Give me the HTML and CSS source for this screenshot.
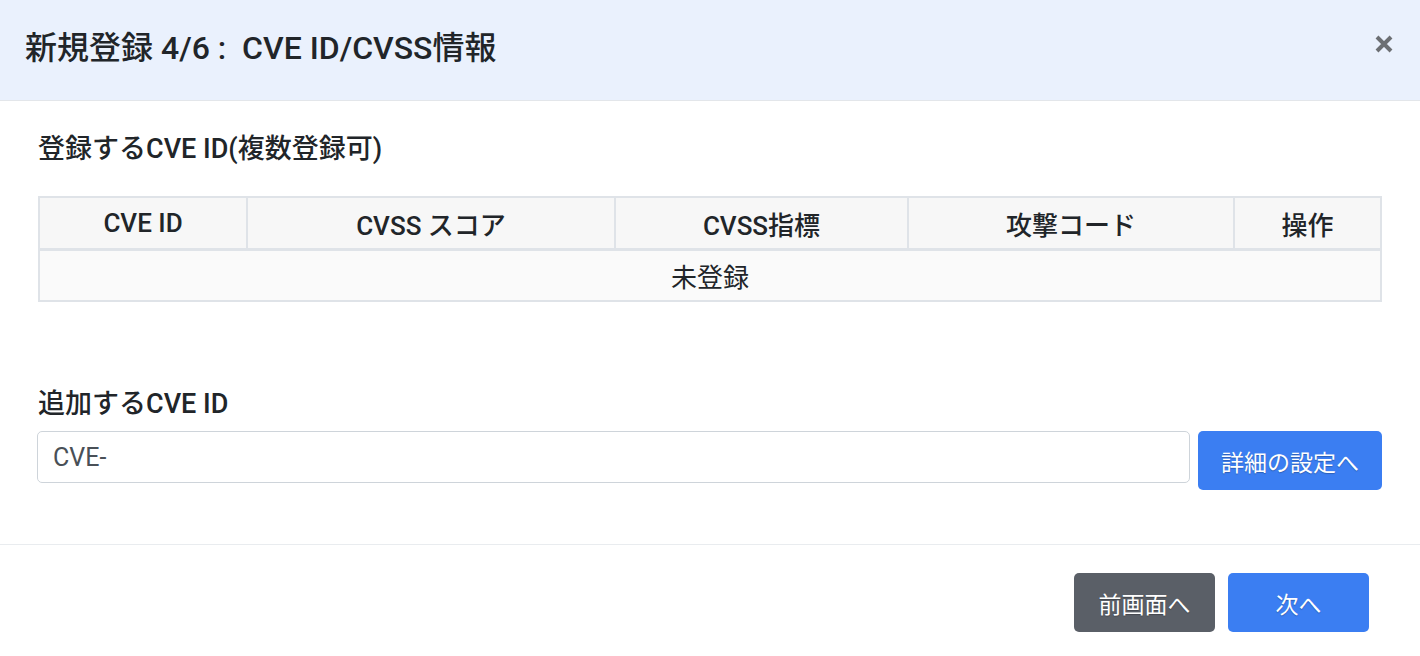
FILE: index.html
```html
<!DOCTYPE html>
<html lang="ja">
<head>
    <meta charset="UTF-8">
    <meta name="viewport" content="width=device-width, initial-scale=1.0">
    <title>新規登録 4/6</title>
    <link rel="stylesheet" href="styles.css">
</head>
<body>
    <div class="modal">
        <header class="modal-header">
            <h1 class="modal-title">新規登録 4/6 :&nbsp; CVE ID/CVSS情報</h1>
            <button class="close-button" aria-label="閉じる">
                <svg width="20" height="20" viewBox="0 0 20 20">
                    <path d="M3 3 L17 17 M17 3 L3 17" stroke="#6c6f73" stroke-width="4" />
                </svg>
            </button>
        </header>

        <div class="modal-body">
            <h2 class="section-title first">登録するCVE ID(複数登録可)</h2>
            <table class="cve-table">
                <thead>
                    <tr>
                        <th class="col-id">CVE ID</th>
                        <th class="col-score">CVSS スコア</th>
                        <th class="col-metric">CVSS指標</th>
                        <th class="col-exploit">攻撃コード</th>
                        <th class="col-action">操作</th>
                    </tr>
                </thead>
                <tbody>
                    <tr>
                        <td colspan="5">未登録</td>
                    </tr>
                </tbody>
            </table>

            <h2 class="section-title second">追加するCVE ID</h2>
            <div class="add-row">
                <input type="text" class="cve-input" value="CVE-">
                <button class="btn btn-primary btn-detail">詳細の設定へ</button>
            </div>
        </div>

        <footer class="modal-footer">
            <button class="btn btn-secondary">前画面へ</button>
            <button class="btn btn-primary">次へ</button>
        </footer>
    </div>
</body>
</html>
```

FILE: styles.css
```css
body {
    margin: 0;
    font-family: Roboto, "Noto Sans CJK JP", sans-serif;
    color: #212529;
    background: #ffffff;
}
.modal {
    width: 1420px;
    height: 656px;
    display: flex;
    flex-direction: column;
}
.modal-header {
    height: 101px;
    box-sizing: border-box;
    background-color: #eaf1fd;
    border-bottom: 1px solid #e3e6ea;
    display: flex;
    align-items: center;
    justify-content: space-between;
    padding: 0 26px 0 25px;
}
.modal-title {
    margin: 0;
    font-size: 32px;
    font-weight: 500;
    color: #212529;
    padding-bottom: 11px;
}
.close-button {
    border: none;
    background: none;
    padding: 0;
    width: 20px;
    height: 20px;
    cursor: pointer;
    margin-bottom: 12px;
}
.modal-body {
    padding: 0 38px 0 38px;
    height: 444px;
    box-sizing: border-box;
    border-bottom: 1px solid #e9ecef;
}
.section-title {
    margin: 0;
    font-size: 27px;
    font-weight: 500;
    line-height: 30px;
}
.section-title.first {
    margin-top: 33px;
    margin-bottom: 32px;
}
.section-title.second {
    margin-top: 87px;
    margin-bottom: 12px;
}
.cve-table {
    width: 1344px;
    border-collapse: collapse;
    font-size: 26px;
}
.cve-table th,
.cve-table td {
    border: 2px solid #dfe3e8;
    text-align: center;
    padding: 0;
}
.cve-table th {
    height: 50px;
    background-color: #f7f7f7;
    font-weight: 500;
    border-bottom-width: 3px;
}
.cve-table td {
    height: 49px;
    background-color: #fafafa;
    font-weight: 400;
}
.col-id { width: 206px; }
.col-score { width: 366px; }
.col-metric { width: 291px; }
.col-exploit { width: 324px; }
.add-row {
    display: flex;
    align-items: flex-start;
    gap: 8px;
    margin-left: -1px;
}
.cve-input {
    width: 1153px;
    height: 52px;
    box-sizing: border-box;
    border: 1px solid #ced4da;
    border-radius: 5px;
    padding: 0 15px;
    font-family: Roboto, "Noto Sans CJK JP", sans-serif;
    font-size: 25px;
    color: #495057;
}
.btn {
    border: none;
    border-radius: 5px;
    font-family: Roboto, "Noto Sans CJK JP", sans-serif;
    font-size: 23px;
    color: #ffffff;
    height: 59px;
    cursor: pointer;
    text-shadow: 0 1px 1px rgba(0, 0, 0, 0.25);
}
.btn-primary {
    background-color: #3b7ef2;
}
.btn-secondary {
    background-color: #5a5f67;
}
.btn-detail {
    width: 184px;
}
.modal-footer {
    display: flex;
    justify-content: flex-end;
    gap: 13px;
    padding: 28px 51px 0 0;
}
.modal-footer .btn {
    width: 141px;
}
```
